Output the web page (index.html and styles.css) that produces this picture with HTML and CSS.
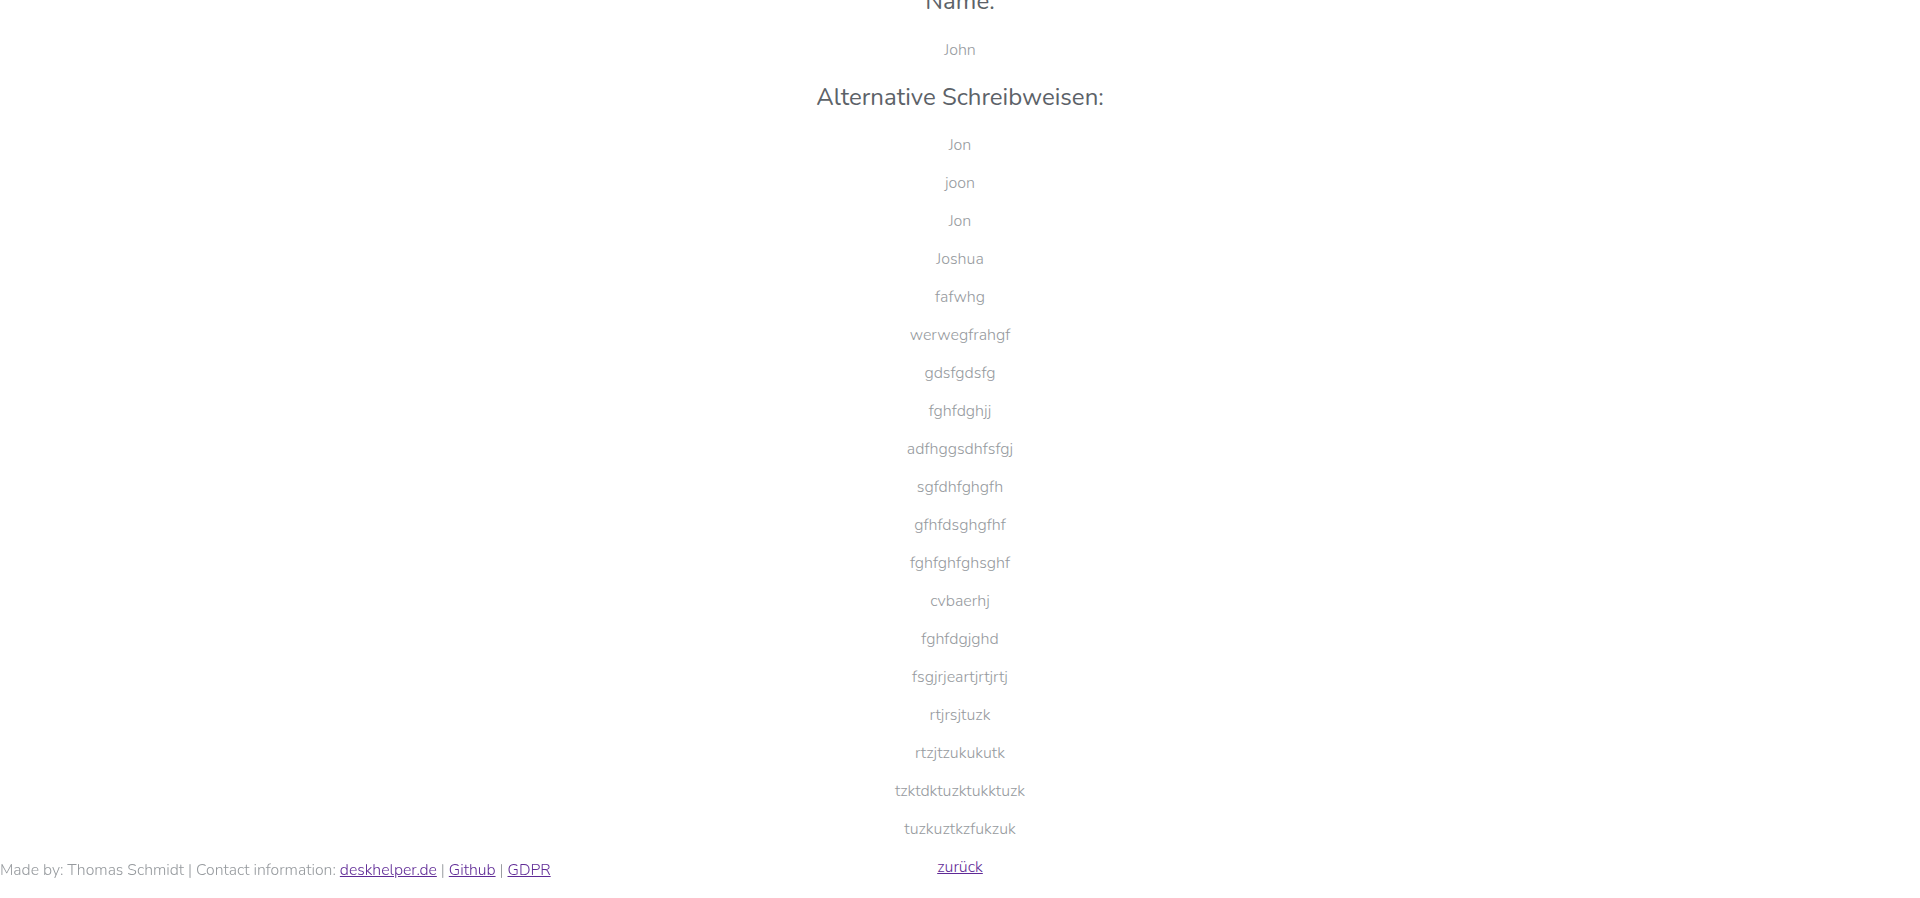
FILE: index.html
```html
<!DOCTYPE html>
<html lang="de">
<head>
<meta charset="utf-8">
<title>Name</title>
<link rel="stylesheet" href="styles.css">
</head>
<body>
<main class="content">
  <h3 class="title title-first">Name:</h3>
  <p class="item">John</p>
  <h3 class="title">Alternative Schreibweisen:</h3>
  <p class="item">Jon</p>
  <p class="item">joon</p>
  <p class="item">Jon</p>
  <p class="item">Joshua</p>
  <p class="item">fafwhg</p>
  <p class="item">werwegfrahgf</p>
  <p class="item">gdsfgdsfg</p>
  <p class="item">fghfdghjj</p>
  <p class="item">adfhggsdhfsfgj</p>
  <p class="item">sgfdhfghgfh</p>
  <p class="item">gfhfdsghgfhf</p>
  <p class="item">fghfghfghsghf</p>
  <p class="item">cvbaerhj</p>
  <p class="item">fghfdgjghd</p>
  <p class="item">fsgjrjeartjrtjrtj</p>
  <p class="item">rtjrsjtuzk</p>
  <p class="item">rtzjtzukukutk</p>
  <p class="item">tzktdktuzktukktuzk</p>
  <p class="item">tuzkuztkzfukzuk</p>
  <p class="item"><a class="link" href="#">zurück</a></p>
</main>
<footer class="footer">Made by: Thomas Schmidt | Contact information: <a class="link" href="#">deskhelper.de</a> | <a class="link" href="#">Github</a> | <a class="link" href="#">GDPR</a></footer>
</body>
</html>
```
FILE: styles.css
```css
html, body {
  margin: 0;
  padding: 0;
  background: #ffffff;
}
body {
  font-family: "Nunito", "Lato", "Open Sans", sans-serif;
  font-weight: 300;
  color: #969a9e;
  overflow: hidden;
  height: 898px;
}
.content {
  display: block;
  text-align: center;
  padding-top: 1px;
  margin-top: -14px;
}
.title {
  font-size: 24px;
  line-height: 29px;
  font-weight: 400;
  color: #5c6268;
  margin: 22px 0 22px;
}
.title-first {
  margin-top: 0;
  margin-bottom: 23px;
}
.item {
  font-size: 16px;
  line-height: 22px;
  margin: 0 0 16px;
}
.link {
  color: #5f2a96;
}
.footer {
  position: fixed;
  left: 0;
  bottom: 0;
  padding-bottom: 17px;
  font-size: 15.75px;
  line-height: 21px;
  color: #969a9e;
}
```
